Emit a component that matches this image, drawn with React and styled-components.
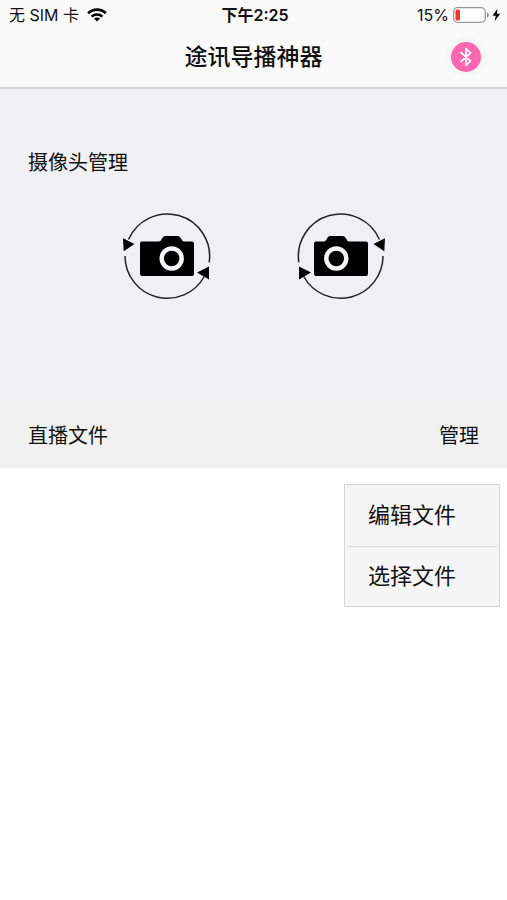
import React from "react";
import styled, { createGlobalStyle } from "styled-components";

const GlobalStyle = createGlobalStyle`
  * {
    box-sizing: border-box;
  }

  body {
    margin: 0;
    background-color: #fff;
    color: #111;
    font-family: "Liberation Sans", "Noto Sans CJK SC", sans-serif;
  }

  button {
    padding: 0;
    border: none;
    background: none;
    color: inherit;
    font-family: inherit;
    cursor: pointer;
  }
`;

const Header = styled.header`
  background-color: #fafafa;
  border-bottom: 2px solid #d2d2d5;
`;

const StatusBar = styled.div`
  display: grid;
  grid-template-columns: 1fr auto 1fr;
  align-items: center;
  height: 30px;
  padding: 0 6px 0 9px;
  font-family: Inter, "Noto Sans CJK SC", sans-serif;
  font-size: 16px;
  line-height: 24px;
`;

const StatusGroup = styled.div`
  display: flex;
  align-items: center;
  justify-content: ${(props) => (props.$end ? "flex-end" : "flex-start")};
  gap: ${(props) => (props.$end ? "4px" : "8px")};
`;

const Clock = styled.time`
  font-weight: 600;
`;

const NavBar = styled.div`
  display: grid;
  grid-template-columns: 1fr auto 1fr;
  align-items: center;
  height: 57px;
  padding: 0 26px 3px;
`;

const Title = styled.h1`
  grid-column: 2;
  margin: 0;
  font-size: 23px;
  font-weight: 500;
  line-height: 32px;
`;

const BluetoothButton = styled.button`
  display: flex;
  align-items: center;
  justify-content: center;
  justify-self: end;
  width: 30px;
  height: 30px;
  border-radius: 50%;
  background-color: #fd67b0;
  box-shadow: 0 0 8px #e2ebe9;
`;

const CameraSection = styled.section`
  padding: 58px 28px 91px;
  background-color: #efeff4;
`;

const SectionTitle = styled.h2`
  margin: 0;
  font-size: 20px;
  font-weight: 400;
  line-height: 32px;
`;

const CameraList = styled.div`
  display: flex;
  justify-content: center;
  gap: 66px;
  padding-top: 21px;
`;

const CameraButton = styled.button`
  display: block;
  width: 110px;
  height: 110px;

  svg {
    display: block;
    transform: ${(props) => (props.$flipped ? "scaleX(-1)" : "none")};
  }
`;

const FileBar = styled.section`
  display: flex;
  align-items: center;
  justify-content: space-between;
  height: 67px;
  padding: 2px 28px 0;
  background-color: #f1f1f1;
`;

const ManageButton = styled.button`
  font-size: 20px;
  line-height: 32px;
`;

const FileArea = styled.main`
  display: flex;
  justify-content: flex-end;
  padding: 16px 7px;
`;

const Menu = styled.div`
  width: 156px;
  padding: 1px 2px 0;
  border: 1px solid #d5d5d5;
  background-color: #f5f5f5;
`;

const MenuItem = styled.button`
  display: block;
  width: 100%;
  height: 60px;
  padding: 0 21px;
  font-size: 22px;
  line-height: 32px;
  text-align: left;

  & + & {
    border-top: 1px solid #d8d8d8;
  }
`;

const WifiIcon = () => (
  <svg width="20" height="14" viewBox="0 0 20 14" aria-hidden="true">
    <path d="M1.2 5.2C6 .4 14 .4 18.8 5.2" fill="none" stroke="#000" strokeWidth="2.7" />
    <path d="M4.6 8.7C7.5 5.9 12.500 5.9 15.4 8.7" fill="none" stroke="#000" strokeWidth="2.5" />
    <path d="M10 13.5 6.9 10.5C8.6 9 11.4 9 13.1 10.5Z" />
  </svg>
);

const BatteryIcon = () => (
  <svg width="48" height="16" viewBox="0 0 48 16" aria-hidden="true">
    <rect x="0.7" y="0.7" width="31.6" height="14.6" rx="4" fill="#fff" stroke="#98989a" strokeWidth="1.3" />
    <rect x="2.5" y="2.5" width="4.5" height="11" rx="1.5" fill="#f5382c" />
    <path d="M34 5.5C36.4 6 36.4 10 34 10.5Z" fill="#8c8c8e" />
    <path d="M44.5 1.8 39.5 8.8H42.8L41.6 14.2 47.2 6.8H43.8Z" />
  </svg>
);

const BluetoothIcon = () => (
  <svg width="14" height="20" viewBox="0 0 14 20" aria-hidden="true">
    <path
      d="M2 5.5 11.5 14 7 18.3V1.7L11.5 6 2 14.5"
      fill="none"
      stroke="#fff"
      strokeWidth="1.7"
      strokeLinejoin="round"
      strokeLinecap="round"
    />
  </svg>
);

const CameraIcon = () => (
  <svg width="110" height="110" viewBox="0 0 110 110" aria-hidden="true">
    <g fill="none" stroke="#222226" strokeWidth="1.5">
      <path d="M98.2 62.3A42.3 42.3 0 0 0 17.5 39.5" />
      <path d="M14 56A42.3 42.3 0 0 0 93.3 76.5" />
    </g>
    <path d="M12 38.3 23.5 44 12.7 51.2Z" />
    <path d="M86 72.5 98 66.5V79.5Z" />
    <path d="M31 41.5H48Q50 41 51 38.5Q52 36 54 36H67Q69 36 70 38.5Q71 41 73 41.5H81Q83 41.5 83 43.5V74Q83 76 81 76H31Q29 76 29 74V43.5Q29 41.5 31 41.5Z" />
    <circle cx="60.7" cy="58.5" r="10" fill="#000" stroke="#f6f6f9" strokeWidth="4.4" />
  </svg>
);

const App = () => {
  return (
    <>
      <GlobalStyle />
      <Header>
        <StatusBar>
          <StatusGroup>
            <span>无 SIM 卡</span>
            <WifiIcon />
          </StatusGroup>
          <Clock>下午2:25</Clock>
          <StatusGroup $end>
            <span>15%</span>
            <BatteryIcon />
          </StatusGroup>
        </StatusBar>
        <NavBar>
          <Title>途讯导播神器</Title>
          <BluetoothButton type="button" aria-label="蓝牙">
            <BluetoothIcon />
          </BluetoothButton>
        </NavBar>
      </Header>
      <CameraSection>
        <SectionTitle>摄像头管理</SectionTitle>
        <CameraList>
          <CameraButton type="button" aria-label="摄像头 1">
            <CameraIcon />
          </CameraButton>
          <CameraButton type="button" aria-label="摄像头 2" $flipped>
            <CameraIcon />
          </CameraButton>
        </CameraList>
      </CameraSection>
      <FileBar>
        <SectionTitle>直播文件</SectionTitle>
        <ManageButton type="button">管理</ManageButton>
      </FileBar>
      <FileArea>
        <Menu>
          <MenuItem type="button">编辑文件</MenuItem>
          <MenuItem type="button">选择文件</MenuItem>
        </Menu>
      </FileArea>
    </>
  );
};

export default App;
